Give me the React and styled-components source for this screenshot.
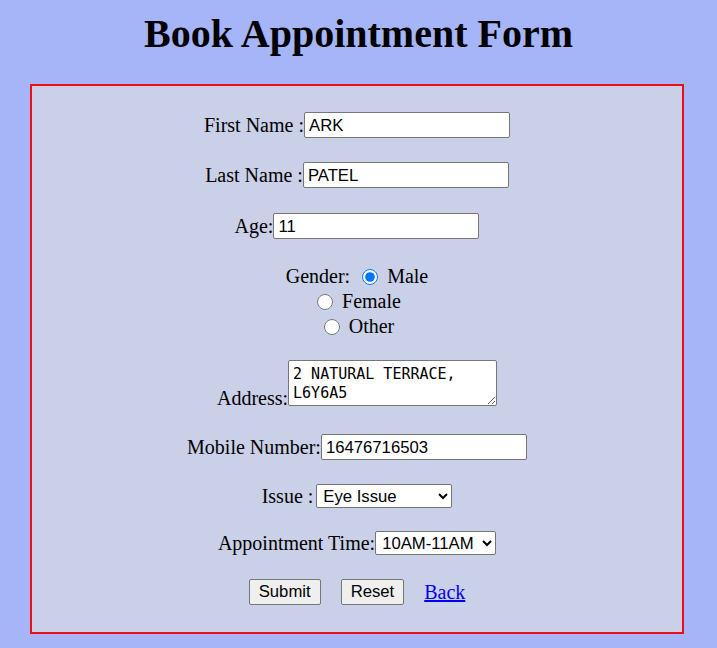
import React from "react";
import styled, { createGlobalStyle } from "styled-components";

const GlobalStyle = createGlobalStyle`
    body {
        margin: 0;
        background: #a6b5f8;
        font-family: "Liberation Serif", "Times New Roman", serif;
    }
`;

const Page = styled.div`
    width: 717px;
    height: 648px;
    overflow: hidden;
`;

const Title = styled.h1`
    margin: 0;
    padding-top: 11px;
    height: 84px;
    box-sizing: border-box;
    font-size: 40px;
    line-height: 46px;
    font-weight: bold;
    text-align: center;
    color: #000;
`;

const FormBox = styled.form`
    margin: 0 33px 0 30px;
    height: 550px;
    box-sizing: border-box;
    border: 2px solid #ee0c17;
    background: #cad0e8;
    display: flex;
    flex-direction: column;
    align-items: center;
    padding-top: 26px;
`;

const Row = styled.div`
    display: flex;
    flex-direction: ${(p) => p.$dir || "row"};
    justify-content: center;
    align-items: ${(p) => p.$align || "center"};
    margin-top: ${(p) => p.$top || 0}px;
    height: ${(p) => p.$height || 26}px;
`;

const Label = styled.label`
    font-size: 20px;
    line-height: 23px;
    color: #000;
    white-space: pre;
    margin-right: ${(p) => p.$gap || 0}px;
`;

const Input = styled.input`
    box-sizing: border-box;
    width: 206px;
    height: 26px;
    margin: 0;
    padding: 2px 4px 0;
    border: 1px solid #767676;
    border-radius: 2px;
    background: #fff;
    font-family: "Liberation Sans", Arial, sans-serif;
    font-size: 16.7px;
    color: #000;
`;

const GenderLine = styled.div`
    display: flex;
    align-items: center;
    justify-content: center;
    height: 25px;
    transform: translateX(${(p) => p.$shift || 0}px);
`;

const Radio = styled.input.attrs({ type: "radio" })`
    width: 16px;
    height: 16px;
    margin: 0 9px 0 0;
    accent-color: #0075ff;
`;

const TextArea = styled.textarea`
    box-sizing: border-box;
    width: 209px;
    height: 46px;
    margin: 0;
    padding: 4px 4px 2px;
    border: 1px solid #767676;
    border-radius: 2px;
    background: #fff;
    font-family: "DejaVu Sans Mono", "Liberation Mono", monospace;
    font-size: 15px;
    line-height: 19px;
    color: #000;
    resize: both;
`;

const AddressLabel = styled(Label)`
    margin-bottom: -4px;
`;

const Select = styled.select`
    box-sizing: border-box;
    width: ${(p) => p.$width}px;
    height: 24px;
    margin: 0;
    padding: 0 2px;
    border: 1px solid #767676;
    border-radius: 2px;
    background: #fff;
    font-family: "Liberation Sans", Arial, sans-serif;
    font-size: 16.7px;
    color: #000;
`;

const Button = styled.button`
    box-sizing: border-box;
    height: 26px;
    padding: 0 9px;
    margin-right: ${(p) => p.$gap || 0}px;
    border: 1px solid #767676;
    border-radius: 2px;
    background: #efefef;
    font-family: "Liberation Sans", Arial, sans-serif;
    font-size: 16.7px;
    color: #000;
`;

const BackLink = styled.a`
    font-size: 20px;
    color: #0000ee;
    text-decoration: underline;
`;

export default function App() {
    return (
        <Page>
            <GlobalStyle />
            <Title>Book Appointment Form</Title>
            <FormBox onSubmit={(e) => e.preventDefault()}>
                <Row>
                    <Label htmlFor="fname">First Name :</Label>
                    <Input id="fname" defaultValue="ARK" />
                </Row>
                <Row $top={24}>
                    <Label htmlFor="lname">Last Name :</Label>
                    <Input id="lname" defaultValue="PATEL" />
                </Row>
                <Row $top={25}>
                    <Label htmlFor="age">Age:</Label>
                    <Input id="age" defaultValue="11" />
                </Row>

                <Row $top={25} $height={75} $dir="column">
                    <GenderLine>
                        <Label $gap={12}>Gender:</Label>
                        <Radio name="gender" defaultChecked />
                        <Label>Male</Label>
                    </GenderLine>
                    <GenderLine $shift={2}>
                        <Radio name="gender" />
                        <Label>Female</Label>
                    </GenderLine>
                    <GenderLine $shift={2}>
                        <Radio name="gender" />
                        <Label>Other</Label>
                    </GenderLine>
                </Row>

                <Row $top={21} $height={46} $align="flex-end">
                    <AddressLabel htmlFor="addr">Address:</AddressLabel>
                    <TextArea id="addr" defaultValue="2 NATURAL TERRACE, L6Y6A5" />
                </Row>
                <Row $top={28}>
                    <Label htmlFor="mobile">Mobile Number:</Label>
                    <Input id="mobile" defaultValue="16476716503" />
                </Row>
                <Row $top={24} $height={24}>
                    <Label htmlFor="issue" $gap={3}>Issue :</Label>
                    <Select id="issue" $width={136} defaultValue="eye">
                        <option value="eye">Eye Issue</option>
                        <option value="ear">Ear Issue</option>
                        <option value="other">Other</option>
                    </Select>
                </Row>
                <Row $top={23} $height={24}>
                    <Label htmlFor="time">Appointment Time:</Label>
                    <Select id="time" $width={121} defaultValue="10">
                        <option value="10">10AM-11AM</option>
                        <option value="11">11AM-12PM</option>
                    </Select>
                </Row>
                <Row $top={24}>
                    <Button type="submit" $gap={20}>Submit</Button>
                    <Button type="reset" $gap={20}>Reset</Button>
                    <BackLink href="#">Back</BackLink>
                </Row>
            </FormBox>
        </Page>
    );
}
